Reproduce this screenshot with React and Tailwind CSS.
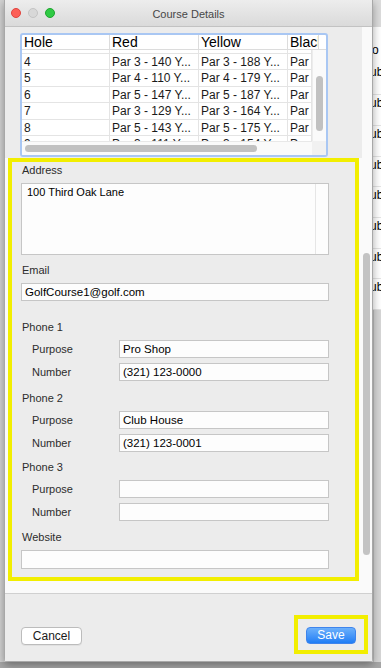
const holes = [
  ['3', 'Par 4 - 112 Y...', 'Par 4 - 182 Y...', 'Par'],
  ['4', 'Par 3 - 140 Y...', 'Par 3 - 188 Y...', 'Par'],
  ['5', 'Par 4 - 110 Y...', 'Par 4 - 179 Y...', 'Par'],
  ['6', 'Par 5 - 147 Y...', 'Par 5 - 187 Y...', 'Par'],
  ['7', 'Par 3 - 129 Y...', 'Par 3 - 164 Y...', 'Par'],
  ['8', 'Par 5 - 143 Y...', 'Par 5 - 175 Y...', 'Par'],
  ['9', 'Par 3 - 111 Y...', 'Par 3 - 154 Y...', 'Par'],
];

function Backdrop() {
  return (
    <div className="flex h-[662px] flex-row">
      <div className="w-[4px] bg-[#d2d2d2]" />
      <div className="flex-1 bg-[#dedede]" />
      <div className="flex w-[8px] flex-col overflow-hidden">
        <div className="h-[27px] shrink-0 bg-[#dcdcdc]" />
        <div className="flex h-[283px] shrink-0 flex-col bg-white text-[12px] leading-[14px] text-black">
          <div className="h-[16px] pt-[16px]" />
          <div className="-ml-[1px] h-[22px]">o</div>
          {[0, 1, 2, 3, 4, 5, 6, 7].map((i) => (
            <div key={i} className="-ml-[3px] h-[31.5px] border-b border-[#e4e4e4] pt-[1px]">
              ub
            </div>
          ))}
        </div>
        <div className="flex-1 border-l border-[#bdbdbd] bg-[#d6d6d6]" />
      </div>
    </div>
  );
}

function CourseTable() {
  return (
    <div className="h-[124px] w-[308px] overflow-hidden rounded-[3px] border-2 border-[#a9c7f3] bg-white">
      <div className="flex h-[15px] flex-row border-b border-[#dcdcdc] text-[14px] leading-[15px] text-black">
        <div className="w-[88px] shrink-0 border-r border-[#dcdcdc] pl-[2px]">Hole</div>
        <div className="w-[89px] shrink-0 border-r border-[#dcdcdc] pl-[2px]">Red</div>
        <div className="w-[89px] shrink-0 border-r border-[#dcdcdc] pl-[2px]">Yellow</div>
        <div className="w-[31px] shrink-0 overflow-hidden whitespace-nowrap border-r border-[#dcdcdc] pl-[2px]">Black</div>
      </div>
      <div className="flex h-[91px] flex-row">
        <div className="w-[290px] overflow-hidden">
          <div className="-mt-[13px]">
            {holes.map((r) => (
              <div key={r[0]} className="flex h-[16.5px] flex-row border-b border-[#e4e4e4] text-[12px] leading-[16px] text-[#1a1a1a]">
                <div className="w-[88px] shrink-0 border-r border-[#e4e4e4] pl-[2px]">{r[0]}</div>
                <div className="w-[89px] shrink-0 overflow-hidden whitespace-nowrap border-r border-[#e4e4e4] pl-[2px]">{r[1]}</div>
                <div className="w-[89px] shrink-0 overflow-hidden whitespace-nowrap border-r border-[#e4e4e4] pl-[2px]">{r[2]}</div>
                <div className="w-[24px] shrink-0 overflow-hidden whitespace-nowrap border-r border-[#e4e4e4] pl-[2px]">{r[3]}</div>
              </div>
            ))}
          </div>
        </div>
        <div className="w-[14px] border-l border-[#ececec] bg-[#fafafa]">
          <div className="ml-[3px] mt-[26px] h-[55px] w-[7px] rounded-full bg-[#c1c1c1]" />
        </div>
      </div>
      <div className="flex h-[14px] flex-row">
        <div className="w-[290px] border-t border-[#e8e8e8] bg-[#fafafa] pt-[3px]">
          <div className="ml-[3px] h-[7px] w-[232px] rounded-full bg-[#c1c1c1]" />
        </div>
        <div className="w-[14px] bg-[#f1f1f1]" />
      </div>
    </div>
  );
}

function Label({ children, className = '' }) {
  return <div className={`h-[14px] pl-[10px] text-[11px] leading-[14px] text-[#2c2c2c] ${className}`}>{children}</div>;
}

function Field({ value, className = '' }) {
  return (
    <div className={`h-[18px] border border-[#c6c6c6] bg-[#fdfdfd] pl-[3px] text-[11.5px] leading-[16px] text-black ${className}`}>
      {value}
    </div>
  );
}

function PhoneRow({ label, value, className = '' }) {
  return (
    <div className={`flex flex-row items-center ${className}`}>
      <div className="w-[107px] shrink-0 pl-[20px] text-[11px] text-[#2c2c2c]">{label}</div>
      <Field value={value} className="w-[210px]" />
    </div>
  );
}

function PhoneGroup({ title, purpose, number, className = '' }) {
  return (
    <div className={className}>
      <Label>{title}</Label>
      <PhoneRow label="Purpose" value={purpose} className="mt-[6px]" />
      <PhoneRow label="Number" value={number} className="mt-[5px]" />
    </div>
  );
}

function DetailsForm() {
  return (
    <div className="ml-[3px] h-[423px] w-[351px] shrink-0 border-4 border-[#f2ee00] bg-[#ececec] pt-[1px]">
      <Label>Address</Label>
      <div className="ml-[9px] mt-[6px] flex h-[72px] w-[308px] flex-row border border-[#c6c6c6] bg-[#fdfdfd]">
        <div className="flex-1 pl-[5px] pt-[1px] text-[11px] leading-[14px] text-black">100 Third Oak Lane</div>
        <div className="w-[13px] border-l border-[#e6e6e6]" />
      </div>
      <Label className="mt-[8px]">Email</Label>
      <Field value="GolfCourse1@golf.com" className="ml-[9px] mt-[6px] w-[308px]" />
      <PhoneGroup title="Phone 1" purpose="Pro Shop" number="(321) 123-0000" className="mt-[19px]" />
      <PhoneGroup title="Phone 2" purpose="Club House" number="(321) 123-0001" className="mt-[10px]" />
      <PhoneGroup title="Phone 3" purpose="" number="" className="mt-[8px]" />
      <Label className="mt-[9px]">Website</Label>
      <Field value="" className="ml-[9px] mt-[6px] w-[308px] h-[19px]" />
    </div>
  );
}

function Window() {
  return (
    <div className="absolute left-[4px] top-0 flex h-[662px] w-[369px] flex-col rounded-b-[4px] border-x border-b border-[#a8a8a8] bg-[#ececec] shadow-[0_3px_8px_rgba(0,0,0,0.35)]">
      <div className="relative flex h-[27px] shrink-0 flex-row items-center gap-[7px] border-b border-[#c2c2c2] bg-gradient-to-b from-[#ededed] to-[#dadada] pl-[6px]">
        <div className="h-[10px] w-[10px] rounded-full border border-[#e0443e] bg-[#fc5f57]" />
        <div className="h-[10px] w-[10px] rounded-full border border-[#c4c4c4] bg-[#d8d8d8]" />
        <div className="h-[10px] w-[10px] rounded-full border border-[#1ea62f] bg-[#2fca44]" />
        <div className="absolute inset-x-0 top-[7px] text-center text-[11px] leading-[14px] text-[#474747]">Course Details</div>
      </div>
      <div className="flex h-[566px] shrink-0 flex-row">
        <div className="flex w-[357px] flex-col bg-[#fafafa]">
          <div className="h-[131px] shrink-0 bg-[#ececec] pl-[15px] pt-[6px]">
            <CourseTable />
          </div>
          <DetailsForm />
        </div>
        <div className="w-[10px] bg-[#fafafa]">
          <div className="ml-[1px] mt-[226px] h-[302px] w-[7px] rounded-full bg-[#c3c3c3]" />
        </div>
      </div>
      <div className="h-px shrink-0 bg-[#d0d0d0]" />
      <div className="flex flex-1 flex-row items-start justify-between bg-[#ececec] pl-[16px] pr-[4px] pt-[21px]">
        <button className="mt-[12px] h-[18px] w-[61px] rounded-[4px] border border-[#bcbcbc] bg-white text-[12px] leading-[16px] text-[#1a1a1a] shadow-[0_1px_0_rgba(0,0,0,0.05)]">
          Cancel
        </button>
        <div className="flex flex-row border-4 border-[#f2ee00] px-[8px] pb-[6px] pt-[8px]">
          <button className="h-[17px] w-[50px] rounded-[4px] border border-[#3e84ec] bg-gradient-to-b from-[#6bb0fb] to-[#1d7df5] text-[12px] leading-[15px] text-white">
            Save
          </button>
        </div>
      </div>
    </div>
  );
}

export default function App() {
  return (
    <div className="relative h-[668px] w-[381px] overflow-hidden bg-[#a6a6a6] font-['Liberation_Sans',Arial,sans-serif]">
      <Backdrop />
      <Window />
    </div>
  );
}
